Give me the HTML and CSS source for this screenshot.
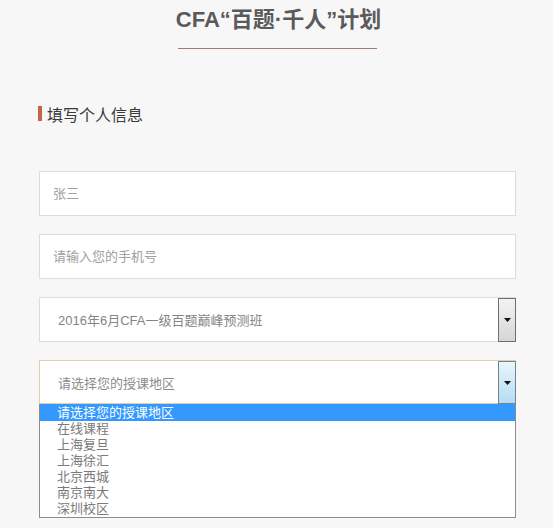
FILE: index.html
```html
<!DOCTYPE html>
<html lang="zh-CN">
<head>
<meta charset="utf-8">
<title>CFA“百题·千人”计划</title>
<link rel="stylesheet" href="styles.css">
</head>
<body>
<div class="page">
  <h1 class="title">CFA“百题·千人”计划</h1>
  <div class="divider"></div>
  <h2 class="section"><span class="bar"></span><span>填写个人信息</span></h2>
  <form class="form">
    <input class="field" type="text" placeholder="张三">
    <input class="field" type="text" placeholder="请输入您的手机号">
    <div class="select">
      <span class="select-text">2016年6月CFA一级百题巅峰预测班</span>
      <span class="select-btn"><svg width="7" height="4" viewBox="0 0 7 4"><polygon points="0,0 7,0 3.5,4" fill="#111"/></svg></span>
    </div>
    <div class="select-wrap">
      <div class="select select-open">
        <span class="select-text">请选择您的授课地区</span>
        <span class="select-btn select-btn-active"><svg width="7" height="4" viewBox="0 0 7 4"><polygon points="0,0 7,0 3.5,4" fill="#111"/></svg></span>
      </div>
      <ul class="options">
        <li class="option option-selected">请选择您的授课地区</li>
        <li class="option">在线课程</li>
        <li class="option">上海复旦</li>
        <li class="option">上海徐汇</li>
        <li class="option">北京西城</li>
        <li class="option">南京南大</li>
        <li class="option">深圳校区</li>
      </ul>
    </div>
  </form>
</div>
</body>
</html>
```
FILE: styles.css
```css
html, body {
  margin: 0;
  padding: 0;
  background: #f7f7f8;
}
body {
  font-family: "Liberation Sans", "Noto Sans CJK SC", sans-serif;
  height: 528px;
  overflow: hidden;
}
.page {
  width: 477px;
  padding-left: 39px;
  display: flex;
  flex-direction: column;
}
.title {
  margin: 0;
  padding-top: 6px;
  line-height: 28px;
  height: 28px;
  font-size: 22px;
  font-weight: bold;
  color: #5a5a5a;
  text-align: center;
  padding-left: 2px;
}
.divider {
  margin: 14px auto 0;
  width: 199px;
  height: 1px;
  background: #9e7c72;
}
.section {
  margin: 57px 0 0;
  display: flex;
  align-items: flex-start;
  height: 20px;
  line-height: 20px;
  font-size: 16px;
  font-weight: normal;
  color: #3a3a3a;
}
.bar {
  width: 4px;
  height: 15px;
  background: #c0674b;
  margin-right: 5px;
  margin-left: -1px;
}
.form {
  margin: 45px 0 0;
  display: flex;
  flex-direction: column;
  gap: 18px;
}
.field {
  box-sizing: border-box;
  width: 477px;
  height: 45px;
  margin: 0;
  border: 1px solid #dcdcdc;
  background: #fff;
  padding: 0 0 0 13px;
  font-family: "Liberation Sans", "Noto Sans CJK SC", sans-serif;
  font-size: 13px;
  color: #666;
  outline: none;
}
.field::placeholder {
  color: #a0a0a0;
}
.select {
  box-sizing: border-box;
  width: 477px;
  height: 45px;
  border: 1px solid #dcdcdc;
  background: #fff;
  display: flex;
  align-items: stretch;
}
.select-text {
  flex: 1;
  display: flex;
  align-items: center;
  padding-left: 18px;
  font-size: 13px;
  color: #858585;
}
.select-btn {
  box-sizing: border-box;
  width: 18px;
  margin: 0 -1px -1px 0;
  border: 1px solid #6e6e6e;
  background: linear-gradient(#f3f3f3, #d6d6d6);
  display: flex;
  align-items: center;
  justify-content: center;
}
.select-wrap {
  display: flex;
  flex-direction: column;
}
.select-open {
  height: 44px;
  border-color: #e2d1a8;
}
.select-open .select-text {
  color: #8c8c8c;
}
.select-btn-active {
  border-color: #75828e;
  background: linear-gradient(#e8f5fd, #b4dcf3);
}
.options {
  list-style: none;
  margin: 0;
  padding: 0;
  box-sizing: border-box;
  width: 477px;
  border: 1px solid #8c8c8c;
  border-top-color: #3399ff;
  background: #fff;
}
.option {
  height: 16px;
  line-height: 16px;
  padding-left: 17px;
  font-size: 13px;
  color: #7a7a7a;
}
.option-selected {
  background: #3399ff;
  color: #fff;
}
```
